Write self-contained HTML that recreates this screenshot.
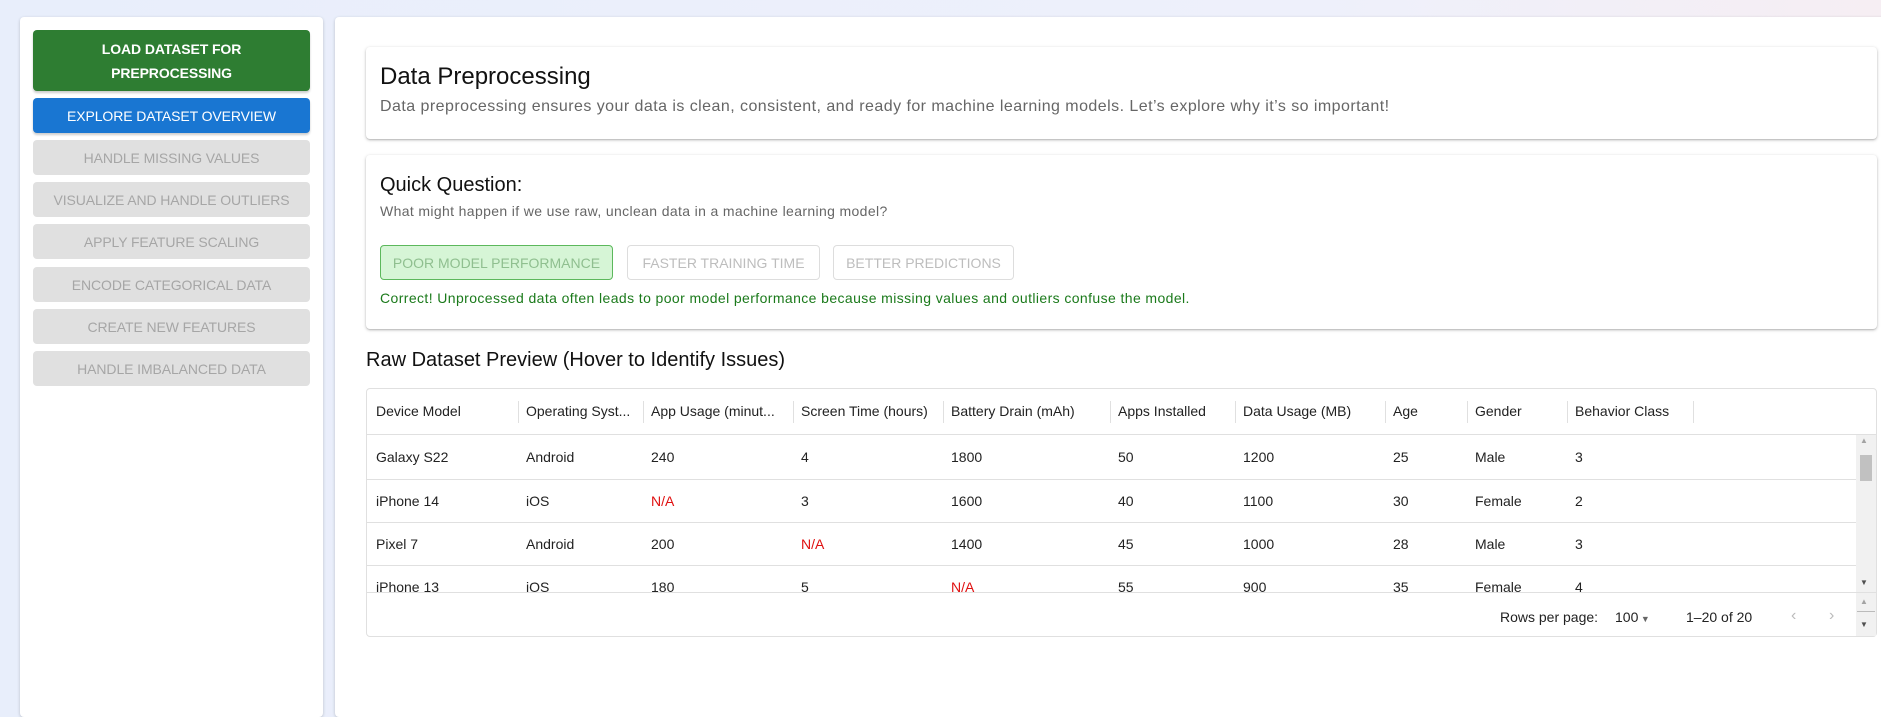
<!DOCTYPE html>
<html><head><meta charset="utf-8"><style>
*{box-sizing:border-box;margin:0;padding:0}
body{width:1881px;height:706px;overflow:hidden;background:linear-gradient(90deg,#e8eefb,#eef0fb 70%,#f6eef3);font-family:"Liberation Sans",Arial,sans-serif;position:relative}
.side{position:absolute;left:20px;top:17px;width:303px;height:700px;background:#fff;border-radius:4px;box-shadow:0 1px 3px rgba(0,0,0,.2)}
.btn{position:absolute;left:13px;width:277px;border-radius:4px;font-size:14px;font-weight:bold;text-align:center;text-transform:uppercase;display:flex;align-items:center;justify-content:center;letter-spacing:-0.1px}
.dis{background:#e0e0e0;color:#a6a6a6;font-weight:normal;height:35px}
.main{position:absolute;left:335px;top:17px;width:1560px;height:700px;background:#fff;border-radius:4px;box-shadow:0 1px 3px rgba(0,0,0,.2)}
.card{position:absolute;left:31px;width:1511px;background:#fff;border-radius:4px;box-shadow:0 1px 3px rgba(0,0,0,.25),0 1px 1px rgba(0,0,0,.1)}
.t{position:absolute;white-space:nowrap}
.ob{position:absolute;top:228px;height:35px;border:1px solid #ddd;border-radius:4px;color:#bdbdbd;font-size:14px;display:flex;align-items:center;justify-content:center}
.tbl{position:absolute;left:31px;top:371px;width:1511px;height:249px;border:1px solid #e0e0e0;border-radius:4px;font-size:14px;color:#222}
.hl{position:absolute;left:0;height:1px;background:#e0e0e0}
.c{position:absolute;white-space:nowrap}
.na{color:#e01010}
.sep{position:absolute;top:12px;width:1px;height:22px;background:#e0e0e0}
</style></head><body>
<div class="side">
<div class="btn" style="top:13px;height:61px;background:#2e7d32;color:#fff;line-height:24px;box-shadow:0 2px 2px rgba(0,0,0,.2)">LOAD DATASET FOR<br>PREPROCESSING</div>
<div class="btn" style="top:81px;height:35px;background:#1976d2;color:#fff;font-weight:normal;box-shadow:0 2px 2px rgba(0,0,0,.2)">EXPLORE DATASET OVERVIEW</div>
<div class="btn dis" style="top:123px">HANDLE MISSING VALUES</div>
<div class="btn dis" style="top:165px">VISUALIZE AND HANDLE OUTLIERS</div>
<div class="btn dis" style="top:207px">APPLY FEATURE SCALING</div>
<div class="btn dis" style="top:250px">ENCODE CATEGORICAL DATA</div>
<div class="btn dis" style="top:292px">CREATE NEW FEATURES</div>
<div class="btn dis" style="top:334px">HANDLE IMBALANCED DATA</div>
</div>
<div class="main">
<div class="card" style="top:30px;height:92px">
<div class="t" style="left:14px;top:16px;font-size:24px;color:#111">Data Preprocessing</div>
<div class="t" style="left:14px;top:51px;font-size:16px;color:#666;letter-spacing:0.45px">Data preprocessing ensures your data is clean, consistent, and ready for machine learning models. Let’s explore why it’s so important!</div>
</div>
<div class="card" style="top:138px;height:174px">
<div class="t" style="left:14px;top:19px;font-size:20px;color:#111">Quick Question:</div>
<div class="t" style="left:14px;top:48px;font-size:14px;color:#666;letter-spacing:0.36px">What might happen if we use raw, unclean data in a machine learning model?</div>
<div class="t" style="left:14px;top:135px;font-size:14px;color:#1b7a1b;letter-spacing:0.4px">Correct! Unprocessed data often leads to poor model performance because missing values and outliers confuse the model.</div>
</div>
<div class="ob" style="left:45px;width:233px;background:#d6f5d6;border-color:#5cb85c;color:#8fbf8f">POOR MODEL PERFORMANCE</div>
<div class="ob" style="left:292px;width:193px">FASTER TRAINING TIME</div>
<div class="ob" style="left:498px;width:181px">BETTER PREDICTIONS</div>
<div class="t" style="left:31px;top:332px;font-size:20px;color:#111">Raw Dataset Preview (Hover to Identify Issues)</div>
<div class="tbl">
<div class="sep" style="left:151px"></div><div class="sep" style="left:276px"></div><div class="sep" style="left:426px"></div><div class="sep" style="left:576px"></div><div class="sep" style="left:743px"></div><div class="sep" style="left:868px"></div><div class="sep" style="left:1018px"></div><div class="sep" style="left:1100px"></div><div class="sep" style="left:1200px"></div><div class="sep" style="left:1326px"></div>
<div class="c" style="left:9px;top:14px">Device Model</div><div class="c" style="left:159px;top:14px">Operating Syst...</div><div class="c" style="left:284px;top:14px">App Usage (minut...</div><div class="c" style="left:434px;top:14px">Screen Time (hours)</div><div class="c" style="left:584px;top:14px">Battery Drain (mAh)</div><div class="c" style="left:751px;top:14px">Apps Installed</div><div class="c" style="left:876px;top:14px">Data Usage (MB)</div><div class="c" style="left:1026px;top:14px">Age</div><div class="c" style="left:1108px;top:14px">Gender</div><div class="c" style="left:1208px;top:14px">Behavior Class</div>
<div class="hl" style="top:45px;width:1509px"></div>
<div class="c" style="left:9px;top:60px">Galaxy S22</div><div class="c" style="left:159px;top:60px">Android</div><div class="c" style="left:284px;top:60px">240</div><div class="c" style="left:434px;top:60px">4</div><div class="c" style="left:584px;top:60px">1800</div><div class="c" style="left:751px;top:60px">50</div><div class="c" style="left:876px;top:60px">1200</div><div class="c" style="left:1026px;top:60px">25</div><div class="c" style="left:1108px;top:60px">Male</div><div class="c" style="left:1208px;top:60px">3</div>
<div class="hl" style="top:90px;width:1489px"></div>
<div class="c" style="left:9px;top:104px">iPhone 14</div><div class="c" style="left:159px;top:104px">iOS</div><div class="c na" style="left:284px;top:104px">N/A</div><div class="c" style="left:434px;top:104px">3</div><div class="c" style="left:584px;top:104px">1600</div><div class="c" style="left:751px;top:104px">40</div><div class="c" style="left:876px;top:104px">1100</div><div class="c" style="left:1026px;top:104px">30</div><div class="c" style="left:1108px;top:104px">Female</div><div class="c" style="left:1208px;top:104px">2</div>
<div class="hl" style="top:133px;width:1489px"></div>
<div class="c" style="left:9px;top:147px">Pixel 7</div><div class="c" style="left:159px;top:147px">Android</div><div class="c" style="left:284px;top:147px">200</div><div class="c na" style="left:434px;top:147px">N/A</div><div class="c" style="left:584px;top:147px">1400</div><div class="c" style="left:751px;top:147px">45</div><div class="c" style="left:876px;top:147px">1000</div><div class="c" style="left:1026px;top:147px">28</div><div class="c" style="left:1108px;top:147px">Male</div><div class="c" style="left:1208px;top:147px">3</div>
<div class="hl" style="top:176px;width:1489px"></div>
<div style="position:absolute;left:0;top:177px;width:1489px;height:26px;overflow:hidden">
<div class="c" style="left:9px;top:13px">iPhone 13</div><div class="c" style="left:159px;top:13px">iOS</div><div class="c" style="left:284px;top:13px">180</div><div class="c" style="left:434px;top:13px">5</div><div class="c na" style="left:584px;top:13px">N/A</div><div class="c" style="left:751px;top:13px">55</div><div class="c" style="left:876px;top:13px">900</div><div class="c" style="left:1026px;top:13px">35</div><div class="c" style="left:1108px;top:13px">Female</div><div class="c" style="left:1208px;top:13px">4</div>
</div>
<div style="position:absolute;left:1489px;top:46px;width:20px;height:157px;background:#f1f1f1"></div>
<div style="position:absolute;left:1493px;top:66px;width:12px;height:26px;background:#c1c1c1"></div>
<div class="t" style="left:1493px;top:47px;font-size:8px;color:#a3a3a3">▲</div>
<div class="t" style="left:1493px;top:189px;font-size:8px;color:#505050">▼</div>
<div class="hl" style="top:203px;width:1509px"></div>
<div class="c" style="left:1133px;top:220px">Rows per page:</div>
<div class="c" style="left:1248px;top:220px">100<span style="font-size:9px;color:#666"> ▼</span></div>
<div class="c" style="left:1319px;top:220px">1–20 of 20</div>
<div class="c" style="left:1424px;top:218px;color:#bbb;font-size:16px">‹</div>
<div class="c" style="left:1462px;top:218px;color:#bbb;font-size:16px">›</div>
<div style="position:absolute;left:1489px;top:204px;width:20px;height:43px;background:#f1f1f1"></div>
<div class="t" style="left:1493px;top:208px;font-size:8px;color:#a3a3a3">▲</div>
<div style="position:absolute;left:1490px;top:222px;width:18px;height:1px;background:#bbb"></div>
<div class="t" style="left:1493px;top:231px;font-size:8px;color:#505050">▼</div>
</div>
</div>
</body></html>
